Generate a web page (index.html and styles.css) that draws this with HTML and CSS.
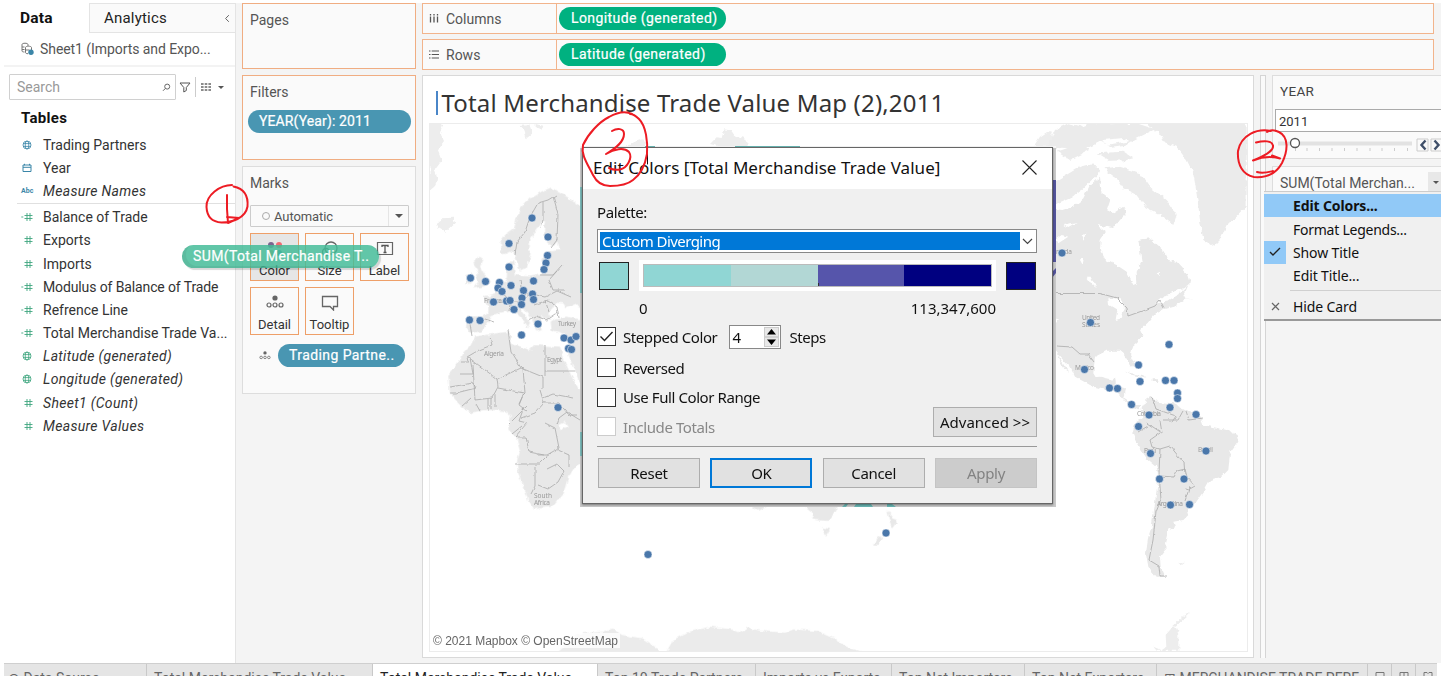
FILE: index.html
```html
<!DOCTYPE html>
<html lang="en">
<head>
<meta charset="utf-8">
<title>Total Merchandise Trade Value Map</title>
<link rel="stylesheet" href="styles.css">
</head>
<body>
<svg class="defs" width="0" height="0">
  <defs>
    <symbol id="globe" viewBox="0 0 10 10"><g fill="none" stroke="currentColor" stroke-width=".8"><circle cx="5" cy="5" r="4"/><ellipse cx="5" cy="5" rx="1.8" ry="4"/><path d="M1 3.6h8M1 6.4h8"/></g></symbol>
    <symbol id="hash" viewBox="0 0 12 10"><path d="M6 1v8M9 1v8M3.5 3.5h8M3.5 6.5h8" fill="none" stroke="currentColor" stroke-width=".9"/></symbol>
    <symbol id="hasheq" viewBox="0 0 12 10"><path d="M6 1v8M9 1v8M3.5 3.5h8M3.5 6.5h8M.3 5h2" fill="none" stroke="currentColor" stroke-width=".9"/></symbol>
    <symbol id="dots" viewBox="0 0 18 14"><circle cx="9" cy="3" r="2.6" fill="#666"/><g fill="none" stroke="#666" stroke-width="1.2"><circle cx="3" cy="10" r="2"/><circle cx="9" cy="10" r="2"/><circle cx="15" cy="10" r="2"/></g></symbol>
    <filter id="coast" x="-5%" y="-5%" width="110%" height="110%"><feTurbulence type="fractalNoise" baseFrequency=".18" numOctaves="2" seed="4"/><feDisplacementMap in="SourceGraphic" scale="5" xChannelSelector="R" yChannelSelector="G"/></filter>
    <filter id="frontier"><feTurbulence type="fractalNoise" baseFrequency=".15" numOctaves="2" seed="7"/><feDisplacementMap in="SourceGraphic" scale="3" xChannelSelector="R" yChannelSelector="G"/></filter>
  </defs>
</svg>
<div class="app">
  <div class="workspace">
    <aside class="data-pane">
      <div class="pane-tabs">
        <div class="pane-tab active">Data</div>
        <div class="pane-tab other"><span class="t-an">Analytics</span>
          <svg width="6" height="9" viewBox="0 0 6 9"><path d="M4.8 1.2L1.6 4.5l3.2 3.3" fill="none" stroke="#666"/></svg></div>
      </div>
      <div class="source">
        <svg width="14" height="14" viewBox="0 0 14 14" fill="none" stroke="#777"><path d="M1 2.5C1 .8 7 .8 7 2.5V4M1 2.5V9c0 .8 1.5 1 2.5 1M1 5h2.5M1 7.5h2.5M4.5 5.5c0-1.7 6-1.7 6 0V8M4.5 5.5v5c0 .8 1 1.2 2.5 1.2M4.5 8h4"/><circle cx="10" cy="10.2" r="2.7" fill="#3b86a8" stroke="none"/></svg>
        <span class="t-src">Sheet1 (Imports and Expo...</span>
      </div>
      <div class="search-row">
        <div class="search"><span>Search</span><svg width="9" height="9" viewBox="0 0 9 9" fill="none" stroke="#666"><circle cx="5.2" cy="3.6" r="2.5"/><path d="M3.4 5.4L1 7.8"/></svg></div>
        <svg class="funnel" width="12" height="11" viewBox="0 0 12 11" fill="none" stroke="#555"><path d="M1 1h10L7.3 5.5v3L4.8 10V5.5z"/></svg>
        <i class="vbar"></i>
        <svg class="grid" width="10" height="8" viewBox="0 0 10 8"><path d="M0 1h10M0 4h10M0 7h10" stroke="#666" stroke-width="1.4" stroke-dasharray="2.6 1.1"/></svg>
        <i class="caret"></i>
      </div>
      <h3 class="tables">Tables</h3>
      <ul class="fields">
        <li class="dim"><svg width="12" height="10"><use href="#globe"/></svg><span>Trading Partners</span></li>
        <li class="dim"><svg width="12" height="10" viewBox="0 0 12 10" fill="none" stroke="currentColor"><path d="M2 2h8v6.500H2zM2 4.300h8M3.500 .8v1.500M8.500 .8v1.500"/></svg><span>Year</span></li>
        <li class="dim"><b class="abc">Abc</b><em>Measure Names</em></li>
        <li class="rule"></li>
        <li><svg width="12" height="10"><use href="#hasheq"/></svg><span>Balance of Trade</span></li>
        <li><svg width="12" height="10"><use href="#hash"/></svg><span>Exports</span></li>
        <li><svg width="12" height="10"><use href="#hash"/></svg><span>Imports</span></li>
        <li><svg width="12" height="10"><use href="#hasheq"/></svg><span class="t-mod">Modulus of Balance of Trade</span></li>
        <li><svg width="12" height="10"><use href="#hasheq"/></svg><span>Refrence Line</span></li>
        <li><svg width="12" height="10"><use href="#hasheq"/></svg><span>Total Merchandise Trade Va...</span></li>
        <li><svg width="12" height="10"><use href="#globe"/></svg><em>Latitude (generated)</em></li>
        <li><svg width="12" height="10"><use href="#globe"/></svg><em>Longitude (generated)</em></li>
        <li><svg width="12" height="10"><use href="#hash"/></svg><em>Sheet1 (Count)</em></li>
        <li><svg width="12" height="10"><use href="#hash"/></svg><em>Measure Values</em></li>
      </ul>
    </aside>

    <section class="cards">
      <div class="card pages"><h4>Pages</h4></div>
      <div class="card filters"><h4>Filters</h4><div class="pill blue">YEAR(Year): 2011</div></div>
      <div class="card marks"><h4>Marks</h4>
        <div class="mark-type"><i class="ring"></i><span>Automatic</span><b><i class="caret big"></i></b></div>
        <div class="mark-grid">
          <div class="mark on"><svg width="18" height="16" viewBox="0 0 18 16"><circle cx="5" cy="4" r="3" fill="#7b6490"/><circle cx="13" cy="4" r="3" fill="#ef6a72"/><circle cx="5" cy="12" r="3" fill="#c79a63"/><circle cx="13" cy="12" r="3" fill="#3a91a5"/></svg>Color</div>
          <div class="mark"><svg width="18" height="16" viewBox="0 0 18 16" fill="none" stroke="#666" stroke-width="1.300"><circle cx="10" cy="7" r="6"/><circle cx="5" cy="11" r="3.500"/></svg>Size</div>
          <div class="mark"><svg width="18" height="16" viewBox="0 0 18 16"><path d="M1.500 1.500h15v12h-15z" fill="none" stroke="#666" stroke-width="1.200"/><path d="M6 6V4.500h6V6M9 4.500v7M7.500 11.500h3" stroke="#555" fill="none" stroke-width="1.300"/></svg>Label</div>
          <div class="mark"><svg width="18" height="14"><use href="#dots"/></svg>Detail</div>
          <div class="mark"><svg width="18" height="16" viewBox="0 0 18 16"><path d="M1.500 1.500h15v10h-4v3.500l-3.500-3.500H1.500z" fill="none" stroke="#666" stroke-width="1.300"/></svg>Tooltip</div>
        </div>
        <div class="detail-row"><svg width="12" height="9"><use href="#dots"/></svg><div class="pill blue">Trading Partne..</div></div>
      </div>
    </section>

    <main class="main">
      <div class="shelf"><div class="shelf-name"><svg width="10" height="9" viewBox="0 0 10 9"><path d="M1.500 0v1.500M5 0v1.500M8.500 0v1.500M1.500 2.500V8.500M5 2.500V8.500M8.500 2.500V8.500" stroke="#555" stroke-width="1.300"/></svg><span>Columns</span></div><div class="pill green">Longitude (generated)</div></div>
      <div class="shelf"><div class="shelf-name"><svg width="10" height="9" viewBox="0 0 10 9"><path d="M0 1h1.500M0 4.500h1.500M0 8h1.500M2.700 1H10M2.700 4.500H10M2.700 8H10" stroke="#555" stroke-width="1.200"/></svg><span>Rows</span></div><div class="pill green">Latitude (generated)</div></div>
      <div class="stage">
        <div class="view">
          <h1><i class="cursor"></i><span>Total Merchandise Trade Value Map (2),2011</span></h1>
          <div class="map">
            <svg width="817" height="527" viewBox="430 124 817 527">
              <g fill="#e8e8e8" filter="url(#coast)">
                <g transform="translate(420 0) scale(.3333)" fill="#ededed">
                  <path d="M25 365l45 6-10 30 12 25-18 25 12 30-22 30 10 25-12 25-12 10zM300 375l25-2 10 30-15 12-8-25zM350 372l20 5-5 15-15-6zM630 430l40-12 15 30h-70zM870 432l20-20 15 2 8-26 20 3 10 14 30 10 15 25-40 10zM60 655l40-2 5 15-30 28-25-15z"/>
                  <path d="M1840 440l20-30 30-20 15 50z"/>
                </g>
                <g transform="translate(420 180) scale(.3333)">
                  <path d="M245 215L242 185 255 165 283 145 288 120 300 85 330 55 365 35 395 22 412 35 440 50 490 85V385L470 372 440 385 430 370 410 368 400 385 385 400 395 415 380 420 365 408 360 420 365 450 350 455 335 415 315 390 295 380 310 400 330 425 325 445 300 410 275 390 255 395 235 400 215 405 205 430 185 455 150 458 138 445 142 410 190 408 205 395 205 375 190 350 225 340 232 320 260 300 262 245 280 245 285 285 330 290 365 283 365 240 385 215 420 210 415 190 390 195 375 180 372 150 375 125 365 120 355 140 330 180 328 210 335 220 320 265 300 275 285 225 270 215 255 222z"/>
                  <path d="M175 230L190 240 180 260 195 285 210 310 190 320 160 325 175 305 165 290 175 270 160 250zM140 285L160 280 155 310 135 312zM392 425L410 415 440 410 490 420V630L458 560 438 510 450 480 430 460 395 450z"/>
                  <path d="M165 470L195 465 265 455 275 470 270 490 330 510 345 495 420 500 435 545 455 590 475 625 490 640V850L470 855 445 890 430 940 395 980 340 988 325 965 315 930 295 880 290 850 300 810 290 775 265 745 272 710 260 695 230 690 190 690 150 700 120 675 90 640 85 585 120 540 130 520 150 500z"/>
                  <path d="M415 735l20-10 8 14-20 12z" fill="#fff"/>
                </g>
                <g transform="translate(1040 110) scale(.3333)">
                  <path d="M30 295L70 300 100 290 130 265 150 225 180 200 185 250 210 270 200 300 220 310 250 290 260 310 240 330 225 350 200 362 182 390 180 420 195 450 230 465 260 485 280 525 292 520 290 485 305 455 300 420 295 390 330 385 350 405 375 425 385 450 410 455 440 490 450 520 430 535 400 545 370 560 345 580 380 575 420 550 445 525 430 560 465 572 440 565 400 590 370 598 345 612 322 640 300 660 310 680 275 710 270 735 285 765 275 770 255 735 240 722 200 722 165 740 160 790 175 815 210 822 225 800 230 840 200 840 160 830 105 800 90 770 60 740 30 700z"/>
                  <path d="M320 38H620V290L590 320 560 345 540 390 520 410 490 390 480 330 470 250 460 190 440 150 410 110 370 95 365 75 340 60z" fill="#ebebeb"/>
                  <path d="M45 60l40-20 40 10 30-12 60 5 70-5 60 20-60 30-30 20-40 5-30-20-50 25-70-5-50 10zM50 125l60-20 40 15-60 30zM120 170l40-10 20 25-50 50-40 30-45 20v-70zM170 130l80-5 30 20-60 15zM190 175l50-5 60 20 30 40 50 40 30 45-10 30-40-30-40-20-30-40-40-20-20-30z" fill="#ebebeb"/>
                  <path d="M50 740l10 5 20 30 8 10-15-8zM255 785l50 10 15 8-50-10zM335 808h20v8h-20z"/>
                  <path d="M45 390l20-15 20 5-30 20zM70 345l40-5-25 14zM120 450l12-8-4 22zM140 500l15 0 15 35-12-10zM125 375l12-4-6 18zM205 565l35 0 15 25-10 35-18 5 5-30-25-15zM350 490l10-4v12zM45 625l15 5-8 8zM190 90l60-6 20 10-70 10zM40 158l240-8-5 10-235 8zM170 345l30 5 40 10-40 8z" fill="#fff"/>
                </g>
                <g transform="translate(1040 380) scale(.3333)">
                  <path d="M120 -5L180 -10 225 0 222 15 255 25 250 55 280 75 300 75 300 88 270 80 235 40 200 25zM305 85L320 60 335 50 350 65 400 70 430 85 480 110 490 135 560 150 590 165 595 185 570 220 565 270 545 290 510 300 490 335 465 370 440 385 445 405 430 420 400 425 405 440 385 450 375 490 380 505 360 530 362 560 375 590 350 590 325 560 318 520 325 470 335 440 345 370 355 290 350 260 320 235 290 190 277 160 285 130 310 110z"/>
                  <path d="M340 800l10 12h65v-50l-12-27-26 30 2 35-15 10zM400 735l30-28 20-8-40 38zM415 550l20-2-10 8z" fill="#ededed"/>
                </g>
                <g transform="translate(420 490) scale(.408 .3333)">
                  <path d="M815 50h35l-20 12zM935 40l20 20 10 30 35 3 20-30v-25zM985 112l20 5-10 20zM1145 60l15 25 12 5-15 25-5-15zM1125 138l10 5-10 22-15-2z"/>
                  <path d="M330 495l60-65 60-5 20-10 25 20 50 10 40 30v20zM600 495l20-45 40-25 50-15 55 8 20 10 20-15 30 10 60 5 20-10 60 5 40 22 30 25 60 25z" fill="#ebebeb"/>
                </g>
              </g>
              <g fill="none" stroke="#aaa" stroke-width=".8" filter="url(#frontier)">
                <path d="M515 255L517 242 525 232 530 217 538 203 548 200 556 195M543 202L543 220 541 228M553 196L558 215 557 240 551 248M540 275L553 275 562 265M497 280L505 296 512 300 510 310M500 302h20l10-8 15 3 12-6 14 6M520 280l2 13 12 2M528 320l8-4 10 4 12-8M534 305l14-5 9 6 2 12M470 324l2 12M482 318l12 4M545 300l4 12M557 271l-8 9 4 10 12 0"/>
                <path d="M490 337L492 345 479 350 467 357 468 362 461 362M468 357L497 379 521 368 511 352 508 330M521 368L543 377V389M545 345V371L545 376M545 371H575M497 379L498 387 492 398 475 400 473 365M460 374H473L470 358M450 387l23-4 3 5-20 5-6 0M461 407l10-9M476 404l4 7M488 399v12M491 398v12M495 395v12M498 388l26 5-5 12 8 6M524 393l-5 11M523 368l2 25M540 390l4 13-9 10-14 5M544 403l15 0 10 12 8 0M509 424l18-18M512 434l10-8M524 407l-5 14 8 2-12 14h11l3 15 15 3M545 423l10 5 4 20-12 7-9 0M515 464h24l8-8M535 466v20l-4 8M538 485l10 4 10-7 6-11-7-7-10 5M558 450l11 5 0 12M557 424l2-6 8-6 13 8M543 398l10-4 20 4"/>
                <path d="M1056 293.500H1100L1117 298 1127 308 1128 316 1142 311 1155 306 1160 300 1164 308M1056 346L1072 347 1080 354 1088 354 1094 362"/>
                <path d="M1152 397l4 12 20 7-4 6M1147 423l15 10-2-12M1138 432l10-6M1160 433L1150 440 1152 447 1160 449 1159 473 1161 500 1156 512 1153 540 1149 560 1159 566 1160 576 1167 576M1160 449l10-3 14 17 1 11M1160 476l14 1 3-6 8-2 2 8 8 9-7 4-3-1M1185 501l5-15M1163 420l15 0 5-9M1186 411l3 9 14-2"/>
              </g>
              <g class="map-labels"><text x="484" y="356" textLength="20">Algeria</text><text x="547" y="362" textLength="15">Egypt</text><text x="558" y="326" textLength="18">Turkey</text><text x="484" y="303" textLength="18">France</text><text x="534" y="498" textLength="18">South</text><text x="534" y="505" textLength="16">Africa</text><text x="1056" y="254" textLength="16">nada</text><text x="1082" y="320" textLength="18">United</text><text x="1082" y="327" textLength="18">States</text><text x="1075" y="370" textLength="19">Mexico</text><text x="1137" y="416" textLength="24">Colombia</text><text x="1198" y="452" textLength="15">Brazil</text><text x="1144" y="453" textLength="12">Peru</text><text x="1157" y="506" textLength="26">Argentina</text></g>
              <g fill="#fff" opacity=".8"><rect x="432" y="633" width="188" height="15"/></g>
              <g class="pts">
                <circle cx="532" cy="218" r="4"/><circle cx="548" cy="237" r="4"/><circle cx="509" cy="243.500" r="4"/><circle cx="547.500" cy="255.500" r="4"/><circle cx="546" cy="263" r="4"/><circle cx="544" cy="269.500" r="4"/><circle cx="509" cy="267" r="4"/><circle cx="470.500" cy="278" r="4"/><circle cx="485.500" cy="281.500" r="4"/><circle cx="499.500" cy="282.500" r="4"/><circle cx="498" cy="288" r="4"/><circle cx="502" cy="291.500" r="4"/><circle cx="511" cy="285.500" r="4"/><circle cx="533.500" cy="281" r="4"/><circle cx="523.500" cy="290.500" r="4"/><circle cx="532.500" cy="294" r="4"/><circle cx="533.500" cy="299.500" r="4"/><circle cx="522" cy="298" r="4"/><circle cx="521.500" cy="304.500" r="4"/><circle cx="493.500" cy="302" r="4"/><circle cx="506.500" cy="301" r="4"/><circle cx="510" cy="300.500" r="4"/><circle cx="514" cy="309.500" r="4"/><circle cx="469.500" cy="320" r="4"/><circle cx="480" cy="320.500" r="4"/><circle cx="538" cy="324" r="4"/><circle cx="521.500" cy="335" r="4"/><circle cx="564" cy="338" r="4"/><circle cx="571" cy="340" r="4"/><circle cx="576" cy="336.500" r="4"/><circle cx="568.500" cy="348.500" r="4"/><circle cx="571.500" cy="349.500" r="4"/><circle cx="558" cy="407.500" r="4"/>
                <circle cx="648" cy="554.500" r="4"/><circle cx="886" cy="533" r="4"/>
                <circle cx="1062" cy="253" r="4"/><circle cx="1090.500" cy="322.500" r="4"/><circle cx="1084.500" cy="369.500" r="4"/><circle cx="1169" cy="344.500" r="4"/><circle cx="1138.500" cy="365" r="4"/><circle cx="1140" cy="381.500" r="4"/><circle cx="1165.500" cy="380.500" r="4"/><circle cx="1174" cy="380.500" r="4"/><circle cx="1109.500" cy="388" r="4"/><circle cx="1117.500" cy="388.500" r="4"/><circle cx="1131.500" cy="404.500" r="4"/><circle cx="1177.500" cy="393" r="4"/><circle cx="1177.500" cy="398.500" r="4"/><circle cx="1170" cy="407.500" r="4"/><circle cx="1149" cy="415" r="4"/><circle cx="1196" cy="414.500" r="4"/><circle cx="1138.500" cy="426.500" r="4"/><circle cx="1150.500" cy="453.500" r="4"/><circle cx="1206" cy="451" r="4"/><circle cx="1159.500" cy="479" r="4"/><circle cx="1184" cy="479" r="4"/><circle cx="1170.500" cy="505" r="4"/><circle cx="1189.500" cy="504.500" r="4"/>
              </g>
              <text class="credit" x="433" y="644.500" textLength="185">© 2021 Mapbox © OpenStreetMap</text>
            </svg>
          </div>
        </div>
        <div class="gutter"></div>
        <aside class="right">
          <div class="year-card">
            <h4>YEAR</h4>
            <div class="year-input">2011</div>
            <svg width="168" height="22" viewBox="1274 132 168 22"><path d="M1279 143.500h134" stroke="#e2e2e2" stroke-width="4"/><path d="M1296.500 148v3M1308 148v3M1320.500 148v3M1333 148v3M1345.500 148v3M1358 148v3M1371 148v3M1383 148v3M1395.500 148v3M1408.500 148v3" stroke="#ccc"/><circle cx="1296" cy="143" r="4.500" fill="#fff" stroke="#555" stroke-width="1.300"/><g fill="#fafafa" stroke="#ccc"><path d="M1418 139h11v12h-11zM1432 139h11v12h-11z"/></g><path d="M1426.500 140.500l-4 4.500 4 4.500M1435.500 140.500l4 4.500-4 4.500" fill="none" stroke="#40506a" stroke-width="2.400"/></svg>
          </div>
          <div class="legend-card"><span>SUM(Total Merchan...</span><b><i class="caret"></i></b></div>
        </aside>
      </div>
    </main>
  </div>
  <footer class="sheets">
    <div class="w0">⊖ Data Source</div><div class="w1">Total Merchandise Trade Value</div><div class="w2 on">Total Merchandise Trade Value..</div><div class="w3">Top 10 Trade Partners</div><div class="w4">Imports vs Exports</div><div class="w5">Top Net Importers</div><div class="w6">Top Net Exporters</div><div class="w7">⊞ MERCHANDISE TRADE PERF</div><div class="w8"><svg width="10" height="10" viewBox="0 0 10 10"><path d="M1 1.500h8v7H1z" fill="none" stroke="#777"/></svg></div><div class="w8"><svg width="10" height="10" viewBox="0 0 10 10"><path d="M1 1.500h8v7H1zM5 1v8" fill="none" stroke="#777"/></svg></div><div class="w9"><svg width="10" height="10" viewBox="0 0 10 10"><path d="M1 1.500h3l1 1 1-1h3v7H1z" fill="none" stroke="#777"/></svg></div>
  </footer>
</div>

<div class="drag-pill">SUM(Total Merchandise T..</div>

<div class="menu">
  <div class="item hot"><i></i><span>Edit Colors...</span></div>
  <div class="item"><i></i><span class="t-fl">Format Legends...</span></div>
  <div class="item"><i class="checked"><svg width="12" height="10" viewBox="0 0 12 10"><path d="M1 5l3 3 7-7" fill="none" stroke="#222" stroke-width="1.400"/></svg></i><span>Show Title</span></div>
  <div class="item"><i></i><span>Edit Title...</span></div>
  <div class="sep"></div>
  <div class="item last"><i><svg width="9" height="9" viewBox="0 0 9 9"><path d="M1 1l7 7M8 1L1 8" stroke="#666" stroke-width="1.200"/></svg></i><span>Hide Card</span></div>
</div>

<div class="snapshot">
  <svg class="fringe" width="476" height="361" viewBox="580 146 476 361"><path d="M580 146h476v361H580z" fill="#c9c9c9"/><path d="M580 146h476v2H580z" fill="#f7f7f7"/><path d="M645 146h10v2h-10zM735 146h65v2h-65z" fill="#69b5b2"/><path d="M580 187h3v106h-3zM580 432h3v24h-3z" fill="#7cbcbb"/><path d="M1052 180h4v82h-4zM1052 272l4-4v5l-4 5z" fill="#53539a"/><path d="M842 507l3-3h3l-2 3zM854 507l2-3h15l2 3zM887 504h5l4 3h-9z" fill="#69b5b2"/></svg>
  <div class="dialog">
    <div class="titlebar"><span>Edit Colors [Total Merchandise Trade Value]</span><svg width="15" height="15" viewBox="0 0 15 15"><path d="M.5.500l14 14M14.500.500l-14 14" stroke="#222" stroke-width="1.100"/></svg></div>
    <div class="body">
      <div class="label"><span>Palette:</span></div>
      <div class="select"><span>Custom Diverging</span><svg width="11" height="7" viewBox="0 0 11 7"><path d="M1 1l4.500 4.500L10 1" fill="none" stroke="#444" stroke-width="1.200"/></svg></div>
      <div class="ramp-row"><i class="swatch lo"></i><div class="ramp"><div><i class="c1"></i><i class="c2"></i><i class="c3"></i><i class="c4"></i></div></div><i class="swatch hi"></i></div>
      <div class="range"><span>0</span><span class="t-max">113,347,600</span></div>
      <div class="check r1"><i class="box"><svg width="15" height="12" viewBox="0 0 15 12"><path d="M1.500 5.500l4 4 8-8.500" fill="none" stroke="#222" stroke-width="1.400"/></svg></i><span class="t-sc">Stepped Color</span><div class="spin"><span>4</span><b><svg width="13" height="18" viewBox="0 0 13 18"><path d="M6.500 1L11 6.500H2zM6.500 17L11 11.500H2z"/><path d="M0 9h13" stroke="#bbb"/></svg></b></div><span class="t-st">Steps</span></div>
      <div class="options"><div>
        <div class="check"><i class="box"></i><span class="t-rv">Reversed</span></div>
        <div class="check"><i class="box"></i><span class="t-uf">Use Full Color Range</span></div>
        <div class="check off"><i class="box"></i><span class="t-it">Include Totals</span></div></div>
        <button class="adv"><span>Advanced &gt;&gt;</span></button></div>
      <div class="buttons"><button>Reset</button><button class="ok">OK</button><button>Cancel</button><button class="disabled">Apply</button></div>
    </div>
  </div>
</div>

<svg class="ink" width="1441" height="676" viewBox="0 0 1441 676" fill="none" stroke="#ed1c24" stroke-width="2" stroke-linecap="round" stroke-linejoin="round">
  <path d="M647.500 146v18" stroke="#111" stroke-width="1"/>
  <path d="M232 185c-12 0-26 10-25.500 22c.500 10 6 15 15 15.500c10 0 24-4 26-16c1-12-4-18-14-20M227 195v14l1 14l11-5l-12-1"/>
  <path d="M632 114c-8-4-16-1-23 3c-10 5-21 17-26 28c-2 10 4 18 10 30c4 8 10 11 17 11c8 0 17-1 23-6c8-6 12-14 14-26c1-12-1-28-8-35c-4-4-8-5-9-5M612 131c5-3 12-3 12 3c0 8-8 14-18 20c8-5 18-7 23-2c4 6-2 16-9 17.500c-5 1-8 0-11-1.500"/>
  <path d="M1271 131c-14-3-30 4-33 20c-1 14 5 24 16 26c12 1 22-3 28-14c6-12 7-26-3-31c-4-2-9-2-12 0M1256 142.500c8-2 16-2 17 3c1 6-10 11-20 15c10-4 20-4 27-2l-8-3M1257 172c6 2 12 0 16-1"/>
</svg>
</body>
</html>
```
FILE: styles.css
```css
* { box-sizing: border-box; }
body { margin: 0; width: 1441px; height: 676px; overflow: hidden; position: relative; background: #fff; font-family: Roboto, "Liberation Sans", sans-serif; font-size: 14px; color: #333; }
h1, h3, h4, ul { margin: 0; padding: 0; font-weight: 400; }
svg { display: block; flex: none; }
.defs { position: absolute; }
.app { padding: 3px 0 0 4px; height: 676px; display: flex; flex-direction: column; }
.workspace { height: 660px; flex: none; display: flex; background: #f4f4f4; }
.caret { border: 3px solid transparent; border-top: 3px solid #555; border-bottom: 0; }
.caret.big { border-width: 4.500px 4.500px 0; }

/* data pane */
.data-pane { width: 232px; background: #fff; border-right: 1px solid #e4e4e4; flex: none; }
.pane-tabs { display: flex; height: 30px; font-size: 16px; color: #222; }
.pane-tab { display: flex; align-items: center; }
.active { width: 85px; padding-left: 16px; font-weight: 700; font-size: 15.500px; letter-spacing: .2px; color: #111; }
.other { flex: 1; background: #fafafa; border: solid #e4e4e4; border-width: 1px 0 1px 1px; padding: 0 5px 0 14px; justify-content: space-between; }
.t-an { font-size: 15px; letter-spacing: .2px; }
.source { height: 34px; display: flex; align-items: center; gap: 5px; padding: 0 0 0 17px; border-bottom: 2px solid #f3f3f3; color: #555; }
.t-src { letter-spacing: -.07px; }
.source svg { margin-top: -1px; }
.search-row { display: flex; align-items: center; margin: 7px 0 0 5px; height: 26px; }
.search { width: 167px; height: 26px; border: 1px solid #d0d0d0; border-radius: 1px; padding: 0 4px 0 7px; display: flex; align-items: center; justify-content: space-between; color: #999; }
.funnel { margin-left: 3px; }
.vbar { width: 1px; height: 20px; background: #ccc; margin-left: 4px; }
.grid { margin: 0 7px 0 5px; }
.tables { font-size: 15px; font-weight: 700; color: #111; line-height: 20px; letter-spacing: .3px; margin: 8px 0 5px 17px; }
.fields { list-style: none; color: #333; }
.fields li { height: 23.200px; display: flex; align-items: center; gap: 10px; padding-left: 17px; color: #3fa67f; white-space: nowrap; }
.fields li.dim { color: #3b86a8; }
.fields span, .fields em { color: #333; }
.fields em { letter-spacing: .32px; }
.fields .t-mod { letter-spacing: -.12px; }
.fields .rule { height: 1px; background: #e0e0e0; margin: 0 0 2px 13px; }
.abc { font-size: 7px; width: 12px; }

/* shelf cards */
.cards { width: 174px; margin-left: 6px; flex: none; }
.card { border: 1px solid #f0ad82; background: #fafafa; padding-left: 7px; }
.card h4 { color: #555; line-height: 18px; padding-top: 7px; }
.pages { height: 66px; }
.filters { height: 85px; margin: 6px 0; padding-left: 5px; }
.filters h4 { padding-left: 2px; }
.marks { height: 228px; border-color: #ddd; }
.pill { height: 23px; border-radius: 12px; color: #fff; line-height: 23px; padding-left: 11px; white-space: nowrap; letter-spacing: .42px; -webkit-text-stroke: .2px #fff; }
.blue { background: #4996b2; }
.green { background: #00b180; width: 167px; margin-left: 2px; padding-left: 12px; }
.filters .pill { width: 163px; margin-top: 9px; letter-spacing: .12px; }
.mark-type { width: 159px; height: 22px; border: 1px solid #ccc; margin-top: 13px; display: flex; align-items: center; padding-left: 11px; gap: 4px; color: #555; font-size: 13px; border-radius: 1px; letter-spacing: -.1px; }
.ring { width: 8px; height: 8px; border: 1.500px solid #aaa; border-radius: 50%; }
.mark-type b { margin-left: auto; width: 20px; height: 20px; border-left: 1px solid #e5e5e5; display: flex; align-items: center; justify-content: center; }
.mark-grid { display: grid; grid-template-columns: repeat(3, 49px); gap: 6px; margin-top: 7px; }
.mark { height: 48px; border: 1px solid #ee9f68; display: flex; flex-direction: column; align-items: center; justify-content: space-between; padding: 7px 0 1px; font-size: 13px; line-height: 16px; color: #333; }
.mark:nth-child(-n+3) { margin-top: -1px; }
.mark.on { background: #e6e6e6; }
.detail-row { display: flex; align-items: center; gap: 7px; margin: 9px 0 0 9px; }
.detail-row .pill { width: 127px; }

/* main area */
.main { flex: 1; margin-left: 6px; min-width: 0; }
.shelf { width: 1012px; height: 31px; border: 1px solid #f2b48c; background: #fafafa; display: flex; align-items: center; margin-bottom: 5px; }
.shelf-name { width: 134px; align-self: stretch; border-right: 1px solid #f2b48c; display: flex; align-items: center; gap: 7px; padding-left: 6px; color: #555; }
.stage { display: flex; }
.view { width: 832px; height: 583px; border: 1px solid #d9d9d9; background: #fff; flex: none; }
.view h1 { height: 47px; display: flex; align-items: center; padding: 6px 0 0 13px; font-family: "Noto Sans", sans-serif; font-size: 24px; letter-spacing: .17px; color: #333; white-space: nowrap; }
.cursor { width: 1.500px; height: 24px; background: #4a86c8; margin-right: 4px; }
.map { margin-left: 6px; width: 819px; border: 1px solid #ececec; }
.map-labels { font: 6.500px "Noto Sans", sans-serif; fill: #999; }
.pts { fill: #4a77aa; stroke: #fff; stroke-width: .5; }
.credit { font: 12px "Liberation Sans", sans-serif; fill: #666; }
.gutter { width: 7px; margin: 0 6px; border: solid #d5d5d5; border-width: 1px 1px 0 1px; height: 583px; background: #fafafa; }
.right { flex: 1; }
.year-card { height: 84px; border: solid #ddd; border-width: 1px 0 1px 1px; background: #fafafa; }
.year-card h4 { padding: 6px 0 0 7px; line-height: 18px; height: 33px; color: #444; font-size: 13.500px; letter-spacing: .3px; }
.year-input { margin-left: 2px; height: 23px; border: 1px solid #aaa; border-right: 0; background: #fff; padding-left: 3px; line-height: 23px; font-size: 13px; }
.legend-card { margin-top: 7px; height: 26px; border: solid #ddd; border-width: 1px 0 0 1px; background: #fafafa; padding-left: 7px; display: flex; justify-content: space-between; line-height: 32px; color: #555; white-space: nowrap; overflow: hidden; }
.legend-card b { width: 13px; background: #e8e8e8; display: flex; align-items: center; margin-top: 5px; padding-left: 5px; }

/* sheet tabs */
.sheets { height: 13px; width: 1433px; display: flex; background: #e5e5e5; border-top: 1px solid #cfcfcf; overflow: hidden; font-size: 14px; color: #666; }
.sheets div { border-right: 1px solid #c9c9c9; padding: 7px 0 0 7px; line-height: 15px; height: 30px; white-space: nowrap; overflow: hidden; flex: none; }
.sheets .w0 { padding-left: 4px; }
.sheets .on { background: #fff; color: #222; }
.w0 { width: 143px; } .w1 { width: 226px; } .w2 { width: 225px; } .w3 { width: 158px; } .w4 { width: 136px; } .w5 { width: 133px; } .w6 { width: 132px; } .w7 { width: 211px; } .w8 { width: 24px; } .w9 { width: 22px; }

/* dragged field */
.drag-pill { position: absolute; left: 182px; top: 245px; width: 197px; height: 23px; border-radius: 12px; background: rgba(67, 187, 151, .84); color: #fff; line-height: 23px; padding-left: 11px; letter-spacing: .37px; -webkit-text-stroke: .2px #fff; white-space: nowrap; box-shadow: 2px 2px 1px rgba(0, 0, 0, .15), inset 4px -2px 0 rgba(0, 0, 0, .05); }

/* context menu */
.menu { position: absolute; left: 1264px; top: 191px; width: 177px; height: 130px; background: #f0f0f0; border-top: 1px solid #ccc; border-bottom: 2px solid #999; padding-top: 2px; font: 14px "Noto Sans", sans-serif; color: #111; }
.item { height: 23.400px; display: flex; align-items: center; gap: 7px; white-space: nowrap; letter-spacing: -.12px; }
.item i { width: 22px; height: 23px; display: flex; align-items: center; justify-content: center; }
.t-fl { letter-spacing: -.25px; }
.hot { background: #91c9f7; font-weight: 700; }
.item .checked { background: #91c9f7; }
.sep { height: 1px; background: #d0d0d0; margin: 2px 0 4px 26px; }

/* color dialog */
.snapshot { position: absolute; left: 580px; top: 146px; width: 476px; height: 361px; font: 15px "Noto Sans", sans-serif; color: #111; }
.fringe { position: absolute; }
.dialog { position: absolute; left: 2px; top: 1px; width: 471px; height: 357px; border: 1px solid #666; background: #f0f0f0; box-shadow: 0 1px 2px rgba(0, 0, 0, .4); }
.titlebar { height: 41px; background: #fff; display: flex; align-items: center; justify-content: space-between; padding: 0 15px 2px 10px; font-size: 17px; letter-spacing: .06px; white-space: nowrap; }
.body { padding: 0 15px 0 14px; font-size: 15px; }
.label { padding-top: 12px; line-height: 22px; height: 40px; letter-spacing: -.4px; }
.select { height: 24px; border: 1px solid #888; background: #fff; padding: 2px 3px 2px 2px; display: flex; align-items: center; justify-content: space-between; }
.select span { background: #0078d7; color: #fff; width: 420px; height: 18px; line-height: 18px; padding-left: 2px; letter-spacing: -.55px; }
.ramp-row { display: flex; justify-content: space-between; align-items: center; margin: 7px 1px 0 2px; height: 31px; }
.swatch { width: 30px; height: 28px; border: 1px solid #222; }
.lo { background: #90d6d4; } .hi { background: #000080; }
.ramp { width: 357px; height: 31px; background: #fff; padding: 4px; }
.ramp div { display: flex; border: 1px solid #bbb; height: 23px; }
.ramp i { flex: 1; }
.c1 { background: #90d6d4; } .c2 { background: #b2d7d5; } .c3 { background: linear-gradient(#333, #333) 0 100% / 1px 3px no-repeat #5655ab; } .c4 { background: #000080; }
.range { display: flex; justify-content: space-between; padding: 0 41px 0 42px; line-height: 20px; margin-top: 7px; }
.check { display: flex; align-items: center; height: 29.600px; white-space: nowrap; letter-spacing: -.42px; }
.box { width: 19px; height: 19px; border: 1px solid #333; background: #fff; margin-right: 7px; display: flex; align-items: center; justify-content: center; }
.off { color: #888; } .off .box { border-color: #ccc; }
.r1 { margin-top: 4px; }
.spin { width: 52px; height: 24px; border: 1px solid #888; background: #fff; display: flex; justify-content: space-between; align-items: center; padding: 1px 1px 1px 2px; margin: 0 8px 0 12px; }
.spin b { background: #e8e8e8; border: 1px solid #ccc; height: 20px; }
.options { display: flex; justify-content: space-between; align-items: flex-end; height: 95px; border-bottom: 1px solid #999; padding-bottom: 4px; }
button { font: 15px "Noto Sans", sans-serif; letter-spacing: -.3px; color: #111; background: #e1e1e1; border: 1px solid #adadad; width: 102px; height: 30px; padding: 0; border-radius: 0; line-height: 26px; }
.adv { width: 104px; margin-bottom: 5px; letter-spacing: 0; }
.buttons { display: flex; justify-content: space-between; margin: 11px 0 0 1px; }
.ok { border: 2px solid #0078d7; }
.disabled { background: #ccc; border-color: #c4c4c4; color: #838383; }

.ink { position: absolute; left: 0; top: 0; pointer-events: none; }
```
